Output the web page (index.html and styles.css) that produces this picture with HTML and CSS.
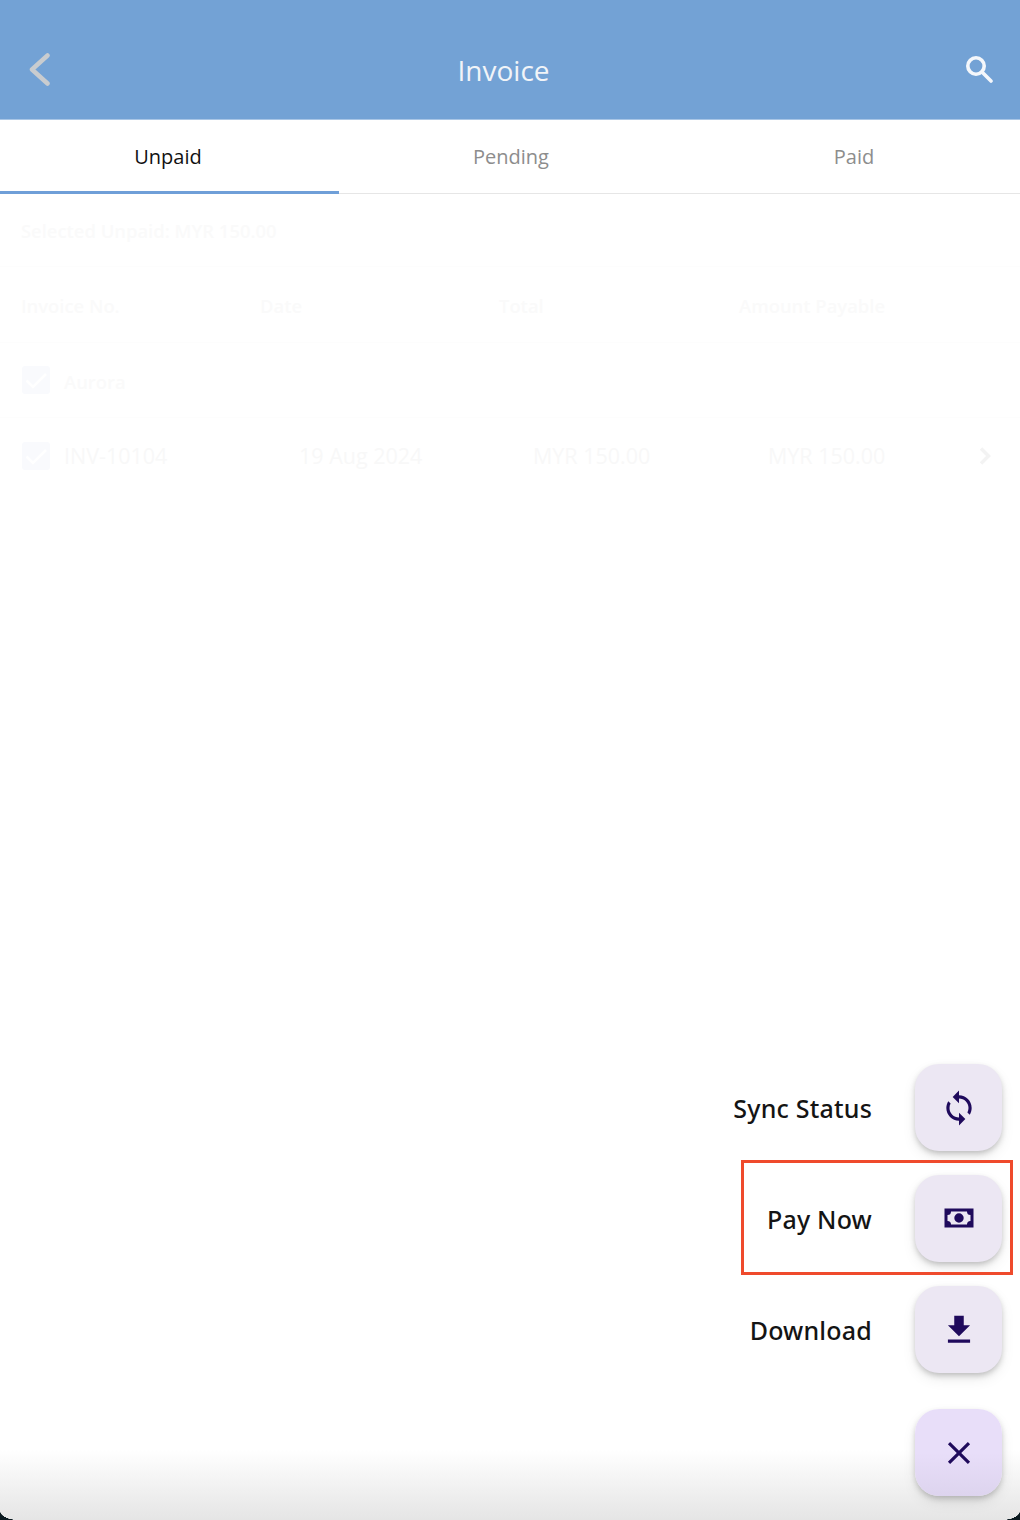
FILE: index.html
```html
<!DOCTYPE html>
<html lang="en">
<head>
<meta charset="utf-8">
<title>Invoice</title>
<link rel="stylesheet" href="styles.css">
</head>
<body>
<div class="app">
  <header class="topbar">
    <svg class="back" viewBox="0 0 21 33" aria-hidden="true"><path d="M18.5 2.5 3 16.5l15.5 14"/></svg>
    <h1 class="title">Invoice</h1>
    <svg class="search" viewBox="0 0 28 28" aria-hidden="true"><circle cx="11" cy="11" r="8.2"/><path d="M17 17l9 9"/></svg>
  </header>
  <nav class="tabs">
    <div class="tab active">Unpaid</div>
    <div class="tab">Pending</div>
    <div class="tab">Paid</div>
  </nav>
  <main class="content">
    <div class="summary">Selected Unpaid: MYR 150.00</div>
    <div class="table-head">
      <span>Invoice No.</span><span>Date</span><span>Total</span><span>Amount Payable</span>
    </div>
    <div class="row">
      <span class="check"><svg viewBox="0 0 28 28" aria-hidden="true"><path d="M4.5 14.500 11 21 24 8"/></svg></span>
      <span class="group">Aurora</span>
    </div>
    <div class="row last">
      <span class="check"><svg viewBox="0 0 28 28" aria-hidden="true"><path d="M4.5 14.500 11 21 24 8"/></svg></span>
      <span>INV-10104</span><span>19 Aug 2024</span><span>MYR 150.00</span><span>MYR 150.00</span>
      <svg class="chev" viewBox="0 0 14 20" aria-hidden="true"><path d="M3 2.500 10.500 10 3 17.500"/></svg>
    </div>
  </main>
  <div class="fade"></div>
  <div class="corner left"></div>
  <div class="corner right"></div>
  <div class="fab-menu">
    <div class="fab-item">
      <span class="fab-label">Sync Status</span>
      <button class="fab" type="button"><svg viewBox="0 0 24 24" aria-hidden="true"><path d="M12 4V1L8 5l4 4V6c3.310 0 6 2.690 6 6 0 1.010-.25 1.970-.7 2.800l1.460 1.460C19.540 15.030 20 13.570 20 12c0-4.420-3.580-8-8-8zm0 14c-3.310 0-6-2.690-6-6 0-1.010.25-1.970.7-2.800L5.240 7.740C4.460 8.970 4 10.430 4 12c0 4.420 3.580 8 8 8v3l4-4-4-4v3z"/></svg></button>
    </div>
    <div class="fab-item">
      <span class="fab-label">Pay Now</span>
      <button class="fab" type="button"><svg viewBox="0 0 38 38" aria-hidden="true"><path fill-rule="evenodd" d="M4.500 8.500h29v19h-29zM11 11.500a3.500 3.500 0 0 1-3.500 3.500v6a3.500 3.500 0 0 1 3.500 3.500h16a3.500 3.500 0 0 1 3.500-3.500v-6a3.500 3.500 0 0 1-3.500-3.500zM19 13.300a4.700 4.700 0 1 1 0 9.400 4.700 4.700 0 0 1 0-9.400z"/></svg></button>
    </div>
    <div class="fab-item">
      <span class="fab-label">Download</span>
      <button class="fab" type="button"><svg viewBox="0 0 24 24" aria-hidden="true"><path d="M19 9h-4V3H9v6H5l7 7 7-7zM5 18v2h14v-2H5z"/></svg></button>
    </div>
    <div class="fab-item">
      <button class="fab close" type="button"><svg viewBox="0 0 24 24" aria-hidden="true"><path d="M19 6.410 17.590 5 12 10.590 6.410 5 5 6.410 10.590 12 5 17.590 6.410 19 12 13.410 17.590 19 19 17.590 13.410 12z"/></svg></button>
    </div>
    <div class="highlight"></div>
  </div>
</div>
</body>
</html>
```
FILE: styles.css
```css
* { box-sizing: border-box; }
html, body { margin: 0; padding: 0; background: #fff; }
body { font-family: "Open Sans", "Noto Sans", sans-serif; }

.app {
  position: relative;
  width: 1020px;
  height: 1520px;
  overflow: hidden;
  background: #fff;
}

.topbar {
  height: 120px;
  padding: 20px 27px 0 29px;
  display: flex;
  align-items: center;
  justify-content: space-between;
  background: #73a2d5;
  border-bottom: 1px solid #a9c6e6;
}
.title {
  margin: 0 8px 0 0;
  font-size: 28px;
  line-height: 38px;
  font-weight: 400;
  color: #f1f4f8;
}
.back { width: 21px; height: 33px; fill: none; stroke: #c9cccf; stroke-width: 4.500; stroke-linecap: round; stroke-linejoin: round; }
.search { width: 28px; height: 28px; margin-bottom: 2px; fill: none; stroke: #f4f7fb; stroke-width: 3.600; stroke-linecap: round; }

.tabs {
  height: 74px;
  display: grid;
  grid-template-columns: 339px 344px 342px;
  border-bottom: 1px solid #e6e6e6;
}
.tab {
  display: flex;
  align-items: center;
  justify-content: center;
  padding-bottom: 1px;
  font-size: 20px;
  color: #8d8d8d;
}
.tab.active {
  color: #111;
  height: 74px;
  padding: 1px 3px 0 0;
  border-bottom: 3px solid #6f9fd8;
}

.content { color: #fafafa; }
.summary {
  height: 73px;
  padding: 23px 0 0 21px;
  font-size: 18.400px;
  line-height: 28px;
  font-weight: 600;
  border-bottom: 1px solid #fdfdfd;
}
.table-head {
  height: 76px;
  padding: 2px 0 0 21px;
  display: grid;
  grid-template-columns: 239px 239px 240px 1fr;
  align-items: center;
  font-size: 18.400px;
  font-weight: 600;
  border-bottom: 1px solid #fdfdfd;
}
.row {
  height: 75px;
  padding-left: 22px;
  display: grid;
  grid-template-columns: 42px 235px 234px 235px 210px 1fr;
  align-items: center;
  font-size: 21.500px;
  color: #f8f8f8;
  border-bottom: 1px solid #fdfdfd;
}
.row.last { border-bottom: 0; }
.group { padding-top: 3px; font-weight: 600; font-size: 18.400px; color: #fafafa; }
.check {
  width: 28px;
  height: 28px;
  border-radius: 3px;
  background: #f9fafd;
  display: block;
}
.check svg { display: block; width: 28px; height: 28px; fill: none; stroke: #fff; stroke-width: 2.500; }
.chev { width: 14px; height: 20px; fill: none; stroke: #f3f3f3; stroke-width: 3.500; }

.fade {
  position: absolute;
  left: 0;
  right: 0;
  bottom: 0;
  height: 70px;
  background: linear-gradient(to bottom, rgba(229,229,229,0), #e5e5e5);
}
.corner {
  position: absolute;
  bottom: 0;
  width: 18px;
  height: 9px;
  background: #0b1a20;
}
.corner.left {
  left: 0;
  -webkit-mask: radial-gradient(18px 9px at 100% 0, transparent 98%, #000 100%);
  mask: radial-gradient(18px 9px at 100% 0, transparent 98%, #000 100%);
}
.corner.right {
  right: 0;
  -webkit-mask: radial-gradient(18px 9px at 0 0, transparent 98%, #000 100%);
  mask: radial-gradient(18px 9px at 0 0, transparent 98%, #000 100%);
}

.fab-menu {
  position: absolute;
  right: 18px;
  bottom: 24px;
  display: flex;
  flex-direction: column;
  align-items: flex-end;
  gap: 24px;
}
.fab-item {
  display: flex;
  align-items: center;
  gap: 43px;
}
.fab-item:nth-child(3) { margin-bottom: 12px; }
.fab-label {
  font-family: "Noto Sans", "Open Sans", sans-serif;
  font-size: 25px;
  line-height: 34px;
  font-weight: 500;
  letter-spacing: 0.200px;
  color: #141414;
}
.fab {
  width: 87px;
  height: 87px;
  padding: 0;
  border: 0;
  border-radius: 24px;
  background: #ece7f3;
  box-shadow: 0 3px 6px -1px rgba(0,0,0,.24), 0 6px 14px rgba(0,0,0,.08);
  display: flex;
  align-items: center;
  justify-content: center;
}
.fab svg { width: 38px; height: 38px; fill: #1f0a5c; }
.fab.close { background: linear-gradient(to bottom, #e8def9 50%, #ddd4ee); }
.highlight {
  position: absolute;
  right: -11px;
  top: 96px;
  width: 272px;
  height: 115px;
  border: 3px solid #ef4a2c;
  pointer-events: none;
}
```
